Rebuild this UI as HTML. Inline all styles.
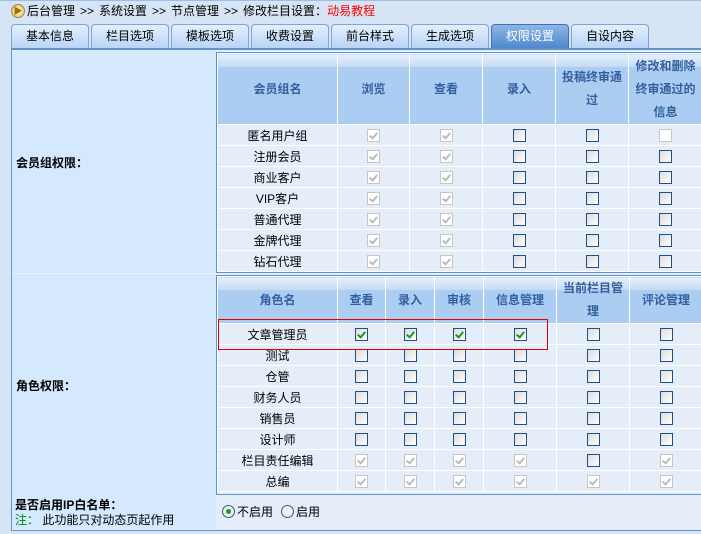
<!DOCTYPE html>
<html><head><meta charset="utf-8"><style>
*{margin:0;padding:0;box-sizing:border-box}
body{width:701px;height:534px;background:#d6e4f5;font-family:"Liberation Sans","Noto Sans CJK SC",sans-serif;font-size:12px;color:#000;position:relative;overflow:hidden}
.a{position:absolute}
.tab{position:absolute;top:24px;height:24px;width:78px;border:1px solid #7fa6d6;border-bottom:none;border-radius:4px 4px 0 0;background:linear-gradient(#e3effd,#b9d5f6);text-align:center;line-height:23px;font-size:12px}
.tab.on{background:linear-gradient(#8db6e6,#4f88cf);color:#fff;border-color:#3f72b5}
table{border-collapse:collapse;position:absolute;table-layout:fixed}
td,th{border:1px solid #fff;text-align:center;padding:0}
th{color:#335f9e;font-weight:bold;background:linear-gradient(#e6f0fb 0,#c6dcf5 12px,#abcdf2 13px);line-height:24px;font-size:12px}
td{background:#e4edf8;height:21px}
.c{display:inline-block;width:13px;height:13px;vertical-align:middle;border:1px solid #1f4f83;background:linear-gradient(135deg,#dcdcdc,#fff);position:relative}
.d{border-color:#c6c6c6;background:#fff}
.d:after,.g:after{content:"";position:absolute;left:3px;top:1px;width:3px;height:6px;border:solid #bbb;border-width:0 2px 2px 0;transform:rotate(40deg)}
.g:after{border-color:#1a9a1a}
.s{display:inline-block;width:24px;text-align:center}
</style></head><body>
<div class="a" style="left:0;top:0;width:701px;height:22px;border-top:1px solid #9fbde2;background:#d6e4f5"></div>
<div class="a" style="left:11px;top:4px;width:14px;height:14px;border-radius:50%;border:1px solid #9a8a50;background:radial-gradient(#fff8d0,#e0c060);color:#a07000;font-size:9px;line-height:12px;text-align:center">▶</div>
<div class="a" style="left:27px;top:3px;font-size:12px;line-height:16px;white-space:nowrap">后台管理<span class="s">&gt;&gt;</span>系统设置<span class="s">&gt;&gt;</span>节点管理<span class="s">&gt;&gt;</span>修改栏目设置：<span style="color:#f00">动易教程</span></div>
<div class="tab" style="left:11px">基本信息</div>
<div class="tab" style="left:91px">栏目选项</div>
<div class="tab" style="left:171px">模板选项</div>
<div class="tab" style="left:251px">收费设置</div>
<div class="tab" style="left:331px">前台样式</div>
<div class="tab" style="left:411px">生成选项</div>
<div class="tab on" style="left:491px">权限设置</div>
<div class="tab" style="left:571px">自设内容</div>
<div class="a" style="left:11px;top:48px;width:690px;height:483px;border:1px solid #5f93cc;border-top:2px solid #5f93cc;border-right:none;background:#e4edf8"></div>
<div class="a" style="left:12px;top:51px;width:204px;height:443px;background:#d4e8fe"></div>
<div class="a" style="left:12px;top:273px;width:204px;height:1px;background:#e8f2fd"></div>
<div class="a" style="left:12px;top:494px;width:204px;height:35px;background:#d4e8fe"></div>
<div class="a" style="left:16px;top:154px;font-weight:bold">会员组权限：</div>
<div class="a" style="left:16px;top:377px;font-weight:bold">角色权限：</div>
<div class="a" style="left:15px;top:496px;font-weight:bold">是否启用IP白名单：</div>
<div class="a" style="left:15px;top:511px"><span style="color:#080">注：</span> 此功能只对动态页起作用</div>
<div class="a" style="left:216px;top:52px;width:485px;height:221px;border:1px solid #5f93cc;border-right:none"></div>
<table style="left:217px;top:53px;width:485px">
<colgroup><col style="width:120px"><col style="width:72px"><col style="width:73px"><col style="width:73px"><col style="width:73px"><col style="width:74px"></colgroup>
<tr><th style="height:71px;line-height:23px">会员组名</th><th>浏览</th><th>查看</th><th>录入</th><th style="line-height:23px">投稿终审通<br>过</th><th style="line-height:23px">修改和删除<br>终审通过的<br>信息</th></tr>
<tr><td>匿名用户组</td><td><i class="c d"></i></td><td><i class="c d"></i></td><td><i class="c"></i></td><td><i class="c"></i></td><td><i class="c" style="border-color:#c6c6c6;background:#fff"></i></td></tr>
<tr><td>注册会员</td><td><i class="c d"></i></td><td><i class="c d"></i></td><td><i class="c"></i></td><td><i class="c"></i></td><td><i class="c"></i></td></tr>
<tr><td>商业客户</td><td><i class="c d"></i></td><td><i class="c d"></i></td><td><i class="c"></i></td><td><i class="c"></i></td><td><i class="c"></i></td></tr>
<tr><td>VIP客户</td><td><i class="c d"></i></td><td><i class="c d"></i></td><td><i class="c"></i></td><td><i class="c"></i></td><td><i class="c"></i></td></tr>
<tr><td>普通代理</td><td><i class="c d"></i></td><td><i class="c d"></i></td><td><i class="c"></i></td><td><i class="c"></i></td><td><i class="c"></i></td></tr>
<tr><td>金牌代理</td><td><i class="c d"></i></td><td><i class="c d"></i></td><td><i class="c"></i></td><td><i class="c"></i></td><td><i class="c"></i></td></tr>
<tr><td>钻石代理</td><td><i class="c d"></i></td><td><i class="c d"></i></td><td><i class="c"></i></td><td><i class="c"></i></td><td><i class="c"></i></td></tr>
</table>
<div class="a" style="left:216px;top:275px;width:485px;height:220px;border:1px solid #5f93cc;border-right:none"></div>
<table style="left:217px;top:276px;width:485px">
<colgroup><col style="width:120px"><col style="width:48px"><col style="width:49px"><col style="width:49px"><col style="width:73px"><col style="width:73px"><col style="width:73px"></colgroup>
<tr><th style="height:46px;line-height:23px">角色名</th><th>查看</th><th>录入</th><th>审核</th><th>信息管理</th><th style="line-height:23px">当前栏目管<br>理</th><th>评论管理</th></tr>
<tr><td>文章管理员</td><td><i class="c g"></i></td><td><i class="c g"></i></td><td><i class="c g"></i></td><td><i class="c g"></i></td><td><i class="c"></i></td><td><i class="c"></i></td></tr>
<tr><td>测试</td><td><i class="c"></i></td><td><i class="c"></i></td><td><i class="c"></i></td><td><i class="c"></i></td><td><i class="c"></i></td><td><i class="c"></i></td></tr>
<tr><td>仓管</td><td><i class="c"></i></td><td><i class="c"></i></td><td><i class="c"></i></td><td><i class="c"></i></td><td><i class="c"></i></td><td><i class="c"></i></td></tr>
<tr><td>财务人员</td><td><i class="c"></i></td><td><i class="c"></i></td><td><i class="c"></i></td><td><i class="c"></i></td><td><i class="c"></i></td><td><i class="c"></i></td></tr>
<tr><td>销售员</td><td><i class="c"></i></td><td><i class="c"></i></td><td><i class="c"></i></td><td><i class="c"></i></td><td><i class="c"></i></td><td><i class="c"></i></td></tr>
<tr><td>设计师</td><td><i class="c"></i></td><td><i class="c"></i></td><td><i class="c"></i></td><td><i class="c"></i></td><td><i class="c"></i></td><td><i class="c"></i></td></tr>
<tr><td>栏目责任编辑</td><td><i class="c d"></i></td><td><i class="c d"></i></td><td><i class="c d"></i></td><td><i class="c d"></i></td><td><i class="c"></i></td><td><i class="c d"></i></td></tr>
<tr><td>总编</td><td><i class="c d"></i></td><td><i class="c d"></i></td><td><i class="c d"></i></td><td><i class="c d"></i></td><td><i class="c d"></i></td><td><i class="c d"></i></td></tr>
</table>
<div class="a" style="left:218px;top:319px;width:330px;height:31px;border:1px solid #e00000"></div>
<div class="a" style="left:222px;top:505px;width:13px;height:13px;border-radius:50%;border:1px solid #2a5a8a;background:#f0f0f0"><div style="position:absolute;left:3px;top:3px;width:5px;height:5px;border-radius:50%;background:#1a9a1a"></div></div>
<div class="a" style="left:237px;top:503px">不启用</div>
<div class="a" style="left:281px;top:505px;width:13px;height:13px;border-radius:50%;border:1px solid #2a5a8a;background:#f0f0f0"></div>
<div class="a" style="left:296px;top:503px">启用</div>
</body></html>
